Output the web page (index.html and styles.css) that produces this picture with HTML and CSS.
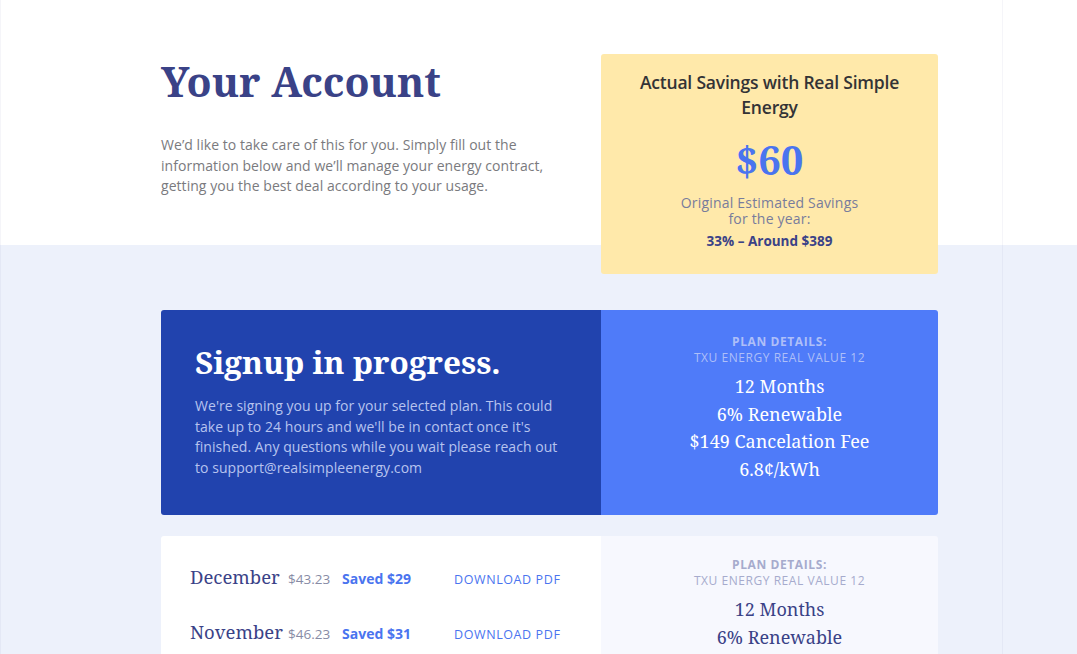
FILE: index.html
```html
<!DOCTYPE html>
<html lang="en">
<head>
<meta charset="utf-8">
<title>Your Account</title>
<link rel="stylesheet" href="styles.css">
</head>
<body>
<div class="frame">
  <div class="container">
    <section class="top">
      <div class="intro">
        <h1 class="title">Your Account</h1>
        <p class="lead">We’d like to take care of this for you. Simply fill out the information below and we’ll manage your energy contract, getting you the best deal according to your usage.</p>
      </div>
      <aside class="savings">
        <h2 class="savings-title">Actual Savings with Real Simple Energy</h2>
        <div class="savings-amount">$60</div>
        <p class="savings-note">Original Estimated Savings<br>for the year:</p>
        <p class="savings-pct">33% – Around $389</p>
      </aside>
    </section>

    <section class="card card-progress">
      <div class="progress-main">
        <h2 class="progress-title">Signup in progress.</h2>
        <p class="progress-text">We're signing you up for your selected plan. This could take up to 24 hours and we'll be in contact once it's finished. Any questions while you wait please reach out to support@realsimpleenergy.com</p>
      </div>
      <div class="plan plan-blue">
        <div class="plan-label">PLAN DETAILS:</div>
        <div class="plan-name">TXU ENERGY REAL VALUE 12</div>
        <ul class="plan-list">
          <li>12 Months</li>
          <li>6% Renewable</li>
          <li>$149 Cancelation Fee</li>
          <li>6.8¢/kWh</li>
        </ul>
      </div>
    </section>

    <section class="card card-history">
      <div class="history">
        <div class="bill">
          <span class="bill-month">December</span>
          <span class="bill-amount">$43.23</span>
          <span class="bill-saved">Saved $29</span>
          <a class="bill-link" href="#">DOWNLOAD PDF</a>
        </div>
        <div class="bill">
          <span class="bill-month">November</span>
          <span class="bill-amount">$46.23</span>
          <span class="bill-saved">Saved $31</span>
          <a class="bill-link" href="#">DOWNLOAD PDF</a>
        </div>
      </div>
      <div class="plan plan-light">
        <div class="plan-label">PLAN DETAILS:</div>
        <div class="plan-name">TXU ENERGY REAL VALUE 12</div>
        <ul class="plan-list">
          <li>12 Months</li>
          <li>6% Renewable</li>
        </ul>
      </div>
    </section>
  </div>
</div>
</body>
</html>
```

FILE: styles.css
```css
* { box-sizing: border-box; }

html, body {
  margin: 0;
  height: 100%;
}

body {
  background: linear-gradient(#ffffff 0, #ffffff 245px, #edf1fb 245px) no-repeat;
  background-color: #edf1fb;
  font-family: "Open Sans", "Lato", sans-serif;
  overflow: hidden;
}

.frame {
  width: 1003px;
  min-height: 100%;
  border-left: 1px solid rgba(110, 120, 170, 0.07);
  border-right: 1px solid rgba(110, 120, 170, 0.07);
}

.container {
  width: 777px;
  margin-left: 160px;
}

/* ---------- top ---------- */
.top {
  display: flex;
  padding-top: 54px;
  height: 245px;
}

.intro {
  width: 440px;
}

.title {
  margin: 3px 0 0;
  font-family: "Noto Serif", "DejaVu Serif", serif;
  font-weight: 700;
  font-size: 41px;
  line-height: 48px;
  color: #3a4287;
}

.lead {
  margin: 30px 0 0;
  width: 420px;
  font-size: 14px;
  letter-spacing: 0.05px;
  line-height: 20.5px;
  color: #7a7a7e;
}

.savings {
  position: relative;
  z-index: 1;
  width: 337px;
  height: 220px;
  padding: 16px 30px 0;
  background: #ffe9aa;
  border-radius: 3px;
  text-align: center;
}

.savings-title {
  margin: 0;
  font-size: 17.5px;
  font-weight: 600;
  line-height: 25px;
  color: #333336;
  letter-spacing: -0.2px;
}

.savings-amount {
  margin-top: 15px;
  font-family: "Noto Serif", "DejaVu Serif", serif;
  font-weight: 700;
  font-size: 40px;
  line-height: 50px;
  color: #4a74ef;
}

.savings-note {
  margin: 10px 0 0;
  font-size: 14px;
  letter-spacing: 0.2px;
  line-height: 16px;
  color: #787c9c;
}

.savings-pct {
  margin: 4px 0 0;
  font-size: 13.5px;
  font-weight: 700;
  line-height: 20px;
  color: #3a4287;
}

/* ---------- cards ---------- */
.card {
  display: flex;
  border-radius: 3px;
  overflow: hidden;
}

.card-progress {
  margin-top: 65px;
  height: 205px;
}

.progress-main {
  width: 440px;
  background: #2143ae;
  padding: 30px 30px 0 34px;
}

.progress-title {
  margin: 0;
  font-family: "Noto Serif", "DejaVu Serif", serif;
  font-weight: 700;
  font-size: 31.5px;
  line-height: 44px;
  color: #ffffff;
}

.progress-text {
  margin: 12px 0 0;
  font-size: 14px;
  letter-spacing: 0.05px;
  line-height: 20.7px;
  color: #b7c3ef;
}

.plan {
  flex: 1;
  text-align: center;
  padding: 24px 0 0 20px;
}

.plan-blue {
  background: #4f7bf9;
}

.plan-light {
  background: #f7f8fe;
  padding-top: 21px;
}

.plan-label {
  font-size: 12px;
  font-weight: 700;
  letter-spacing: 0.6px;
  line-height: 16px;
}

.plan-name {
  font-size: 12px;
  letter-spacing: 0.55px;
  line-height: 16px;
}

.plan-blue .plan-label,
.plan-blue .plan-name {
  color: #aebff8;
}

.plan-light .plan-label,
.plan-light .plan-name {
  color: #a6abcd;
}

.plan-list {
  list-style: none;
  margin: 7px 0 0;
  padding: 0;
  font-family: "Noto Serif", "DejaVu Serif", serif;
  font-size: 18px;
  line-height: 27.7px;
}

.plan-blue .plan-list { color: #ffffff; }
.plan-light .plan-list { color: #3a4287; }

.card-history {
  margin-top: 21px;
  height: 200px;
}

.history {
  width: 440px;
  background: #ffffff;
  padding: 27px 0 0 29px;
}

.bill {
  display: flex;
  align-items: baseline;
  height: 55px;
  line-height: 28px;
}

.bill-month {
  width: 98px;
  flex-shrink: 0;
  font-family: "Noto Serif", "DejaVu Serif", serif;
  font-size: 18.5px;
  color: #3a4287;
}

.bill-amount {
  width: 54px;
  flex-shrink: 0;
  font-size: 13.5px;
  color: #878ba5;
}

.bill-saved {
  width: 112px;
  flex-shrink: 0;
  font-size: 14px;
  font-weight: 700;
  color: #4a74ef;
}

.bill-link {
  font-size: 12.5px;
  letter-spacing: 0.6px;
  color: #4a74ef;
  text-decoration: none;
}
```
